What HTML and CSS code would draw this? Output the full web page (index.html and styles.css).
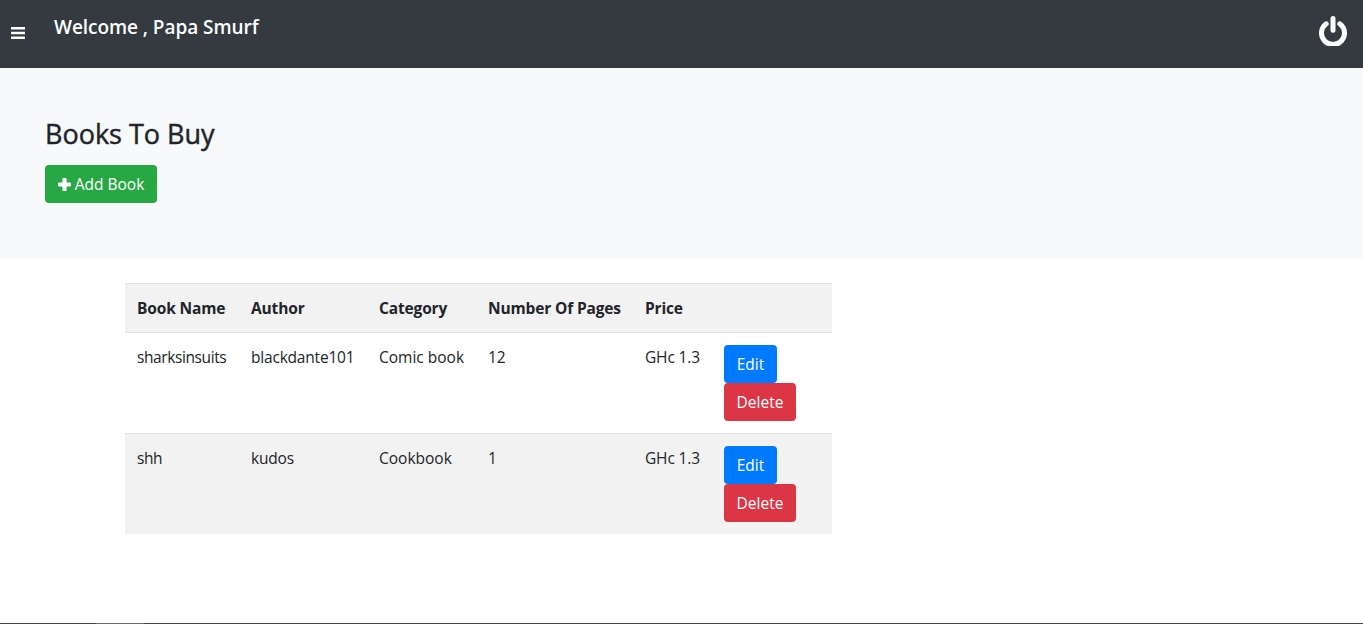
FILE: index.html
```html
<!DOCTYPE html>
<html lang="en">
<head>
<meta charset="utf-8">
<title>Books To Buy</title>
<link rel="stylesheet" href="styles.css">
</head>
<body>
<header class="navbar">
  <svg class="menu-icon" viewBox="0 0 14 12"><path d="M0 0h14v2.500H0zM0 4.800h14v2.500H0zM0 9.600h14V12H0z"/></svg>
  <h5 class="welcome">Welcome , Papa Smurf</h5>
  <svg class="power-icon" viewBox="0 0 28 30"><path class="ring" d="M7.200 7.800A11.500 11.500 0 1 0 20.800 7.800"/><path class="stem" d="M14 2.500v11.700"/></svg>
</header>
<section class="hero">
  <h3 class="title">Books To Buy</h3>
  <button class="btn btn-add"><svg class="plus-icon" viewBox="0 0 13 13"><path d="M5.200 0h2.600q.8 0 .8.8v3.600h3.600q.8 0 .8.8v2.600q0 .8-.8.8H8.600v3.600q0 .8-.8.8H5.200q-.8 0-.8-.8V8.600H.8q-.8 0-.8-.8V5.200q0-.8.8-.8h3.600V.8q0-.8.8-.8z"/></svg><span>Add Book</span></button>
</section>
<main class="content">
  <table class="table">
    <colgroup><col class="c-name"><col class="c-author"><col class="c-category"><col class="c-pages"><col class="c-price"><col class="c-actions"></colgroup>
    <thead>
      <tr><th>Book Name</th><th>Author</th><th>Category</th><th>Number Of Pages</th><th>Price</th><th></th></tr>
    </thead>
    <tbody>
      <tr><td class="name">sharksinsuits</td><td class="author">blackdante101</td><td>Comic book</td><td>12</td><td class="price">GHc 1.3</td>
        <td><div class="actions"><button class="btn btn-edit">Edit</button><button class="btn btn-delete">Delete</button></div></td></tr>
      <tr><td class="name">shh</td><td class="author">kudos</td><td>Cookbook</td><td>1</td><td class="price">GHc 1.3</td>
        <td><div class="actions"><button class="btn btn-edit">Edit</button><button class="btn btn-delete">Delete</button></div></td></tr>
    </tbody>
  </table>
</main>
<footer class="edge"><div class="edge-mark"></div></footer>
</body>
</html>
```

FILE: styles.css
```css
* { box-sizing: border-box; }
body {
  margin: 0;
  height: 624px;
  display: flex;
  flex-direction: column;
  overflow: hidden;
  background: #fff;
  color: #212529;
  font: 400 15.5px/24px "Open Sans", "Noto Sans", sans-serif;
}
.navbar {
  height: 68px;
  flex: none;
  display: flex;
  align-items: flex-start;
  background: #343a40;
  color: #fff;
}
.menu-icon { width: 14px; height: 12px; margin: 27px 29px 0 11px; fill: #fff; }
.welcome { margin: 15px 0 0; font-size: 19px; line-height: 24px; font-weight: 600; letter-spacing: -.05px; }
.power-icon { width: 28px; height: 30px; margin: 16px 16px 0 auto; fill: none; stroke: #fff; stroke-linecap: round; }
.ring { stroke-width: 5; }
.stem { stroke-width: 5; }
.hero {
  height: 191px;
  flex: none;
  padding: 49px 45px 0;
  background: #f8f9fb;
}
.title { margin: 0 0 14px; font-size: 27px; line-height: 34px; font-weight: 500; -webkit-text-stroke: .45px currentColor; }
.btn {
  display: flex;
  align-items: center;
  justify-content: center;
  height: 38px;
  padding: 0;
  border: 0;
  border-radius: 4px;
  color: #fff;
  font: inherit;
  letter-spacing: 0;
}
.btn-add { width: 112px; gap: 4px; background: #28a745; }
.plus-icon { width: 13px; height: 13px; fill: #fff; }
.btn-edit { width: 53px; background: #007bff; }
.btn-delete { width: 72px; background: #dc3545; }
.content { flex: 1; padding: 24px 0 0 125px; }
.table { width: 707px; table-layout: fixed; border-collapse: separate; border-spacing: 0; }
.c-name { width: 114px; }
.c-author { width: 128px; }
.c-category { width: 109px; }
.c-pages { width: 157px; }
.c-price { width: 79px; }
.c-actions { width: 120px; }
th, td { padding: 12px 0 12px 12px; text-align: left; vertical-align: top; white-space: nowrap; }
th { height: 50px; border-top: 1px solid #dee2e6; border-bottom: 1px solid #dee2e6; background: #f2f2f2; font-weight: 700; letter-spacing: -.15px; }
.name { letter-spacing: -.4px; }
.author { letter-spacing: -.2px; }
.price { letter-spacing: -.15px; }
tbody tr + tr td { border-top: 1px solid #dee2e6; background: #f2f2f2; }
.actions { display: flex; flex-direction: column; align-items: flex-start; }
.edge { height: 1px; flex: none; padding-left: 96px; background: #444; }
.edge-mark { width: 48px; height: 1px; background: #6c6c6c; }
```
